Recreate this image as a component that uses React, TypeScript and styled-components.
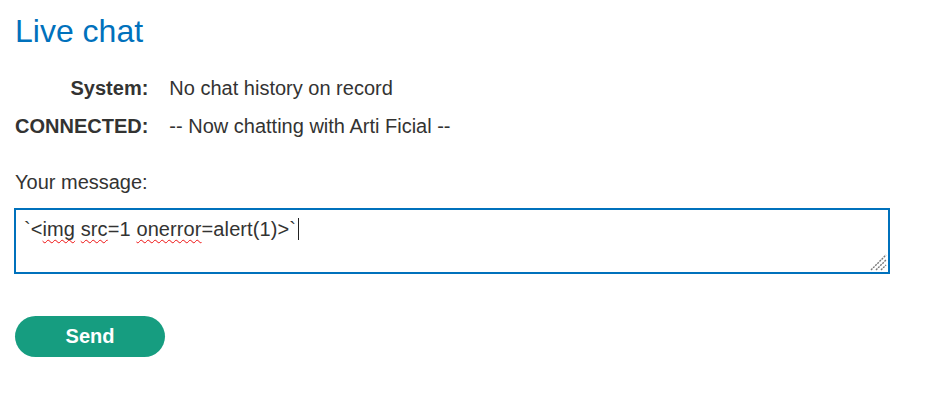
import React from "react";
import styled, { createGlobalStyle } from "styled-components";

const Global = createGlobalStyle`
  html, body { margin: 0; padding: 0; background: #fff; }
  body { font-family: "Liberation Sans", Arial, sans-serif; color: #333332; }
`;

const Page = styled.div`
  padding: 11px 15px 0 15px;
`;

const Title = styled.h1`
  margin: 0;
  font-size: 32px;
  font-weight: 400;
  line-height: 40px;
  color: #0071bc;
`;

const ChatTable = styled.div`
  display: grid;
  grid-template-columns: auto 1fr;
  column-gap: 21px;
  row-gap: 15px;
  margin-top: 26px;
  font-size: 20px;
  line-height: 23px;
`;

const Label = styled.div`
  font-weight: 700;
  text-align: right;
`;

const Value = styled.div``;

const MessageLabel = styled.label`
  display: block;
  margin-top: 33px;
  font-size: 20px;
  line-height: 23px;
`;

const BoxWrap = styled.div`
  position: relative;
  margin-top: 14px;
  margin-left: -1px;
  width: 876px;
  height: 66px;
  box-sizing: border-box;
  border: 2px solid #0071bc;
  padding: 7px 8px 6px 8px;
  font-size: 20px;
  line-height: 24px;
  letter-spacing: 0.1px;
  color: #333332;
`;

const Misspelled = styled.span`
  text-decoration: underline wavy #ee1111;
  text-decoration-thickness: 1.3px;
  text-underline-offset: 3px;
  text-decoration-skip-ink: none;
`;

const Caret = styled.span`
  display: inline-block;
  width: 1px;
  height: 22px;
  background: #222;
  vertical-align: -4px;
  margin-left: 2px;
`;

const Grip = styled.svg`
  position: absolute;
  right: 1px;
  bottom: 1px;
`;

const SendButton = styled.button`
  display: block;
  margin-top: 42px;
  width: 150px;
  height: 41px;
  border: none;
  border-radius: 21px;
  background: #169d80;
  color: #fff;
  font-family: "Liberation Sans", Arial, sans-serif;
  font-weight: 700;
  font-size: 20px;
  padding: 0;
  cursor: pointer;
`;

export default function App() {
  return (
    <>
      <Global />
      <Page>
        <Title>Live chat</Title>
        <ChatTable>
          <Label>System:</Label>
          <Value>No chat history on record</Value>
          <Label>CONNECTED:</Label>
          <Value>-- Now chatting with Arti Ficial --</Value>
        </ChatTable>
        <MessageLabel>Your message:</MessageLabel>
        <BoxWrap>
          `&lt;<Misspelled>img</Misspelled> <Misspelled>src</Misspelled>=1{" "}
          <Misspelled>onerror</Misspelled>=alert(1)&gt;`<Caret />
          <Grip width="17" height="17" viewBox="0 0 17 17">
            <g stroke="#7a7a7a" strokeWidth="1.4">
              <line x1="1" y1="16" x2="16" y2="1" strokeDasharray="2 1" />
              <line x1="6" y1="16" x2="16" y2="6" strokeDasharray="2 1" />
              <line x1="11" y1="16" x2="16" y2="11" strokeDasharray="2 1" />
            </g>
          </Grip>
        </BoxWrap>
        <SendButton>Send</SendButton>
      </Page>
    </>
  );
}
